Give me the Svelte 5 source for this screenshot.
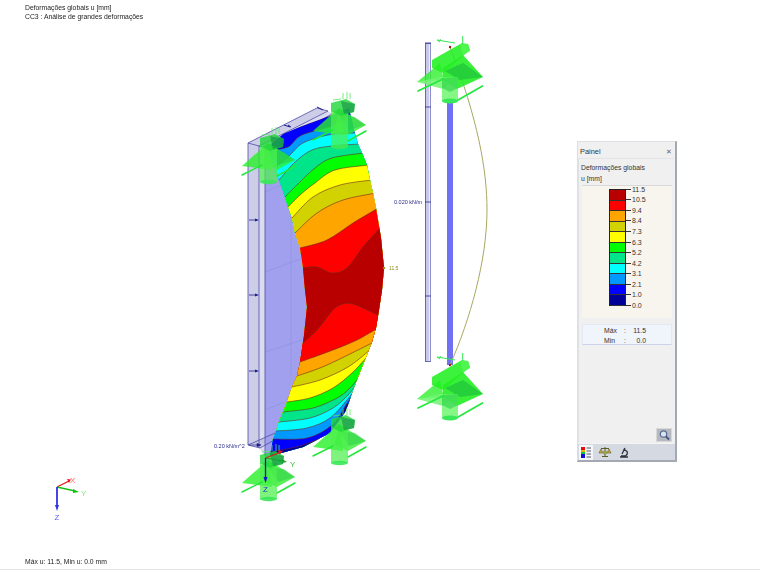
<script>
  const C = {
    navy: '#000099', blue: '#0000ff', azure: '#0099ff', cyan: '#00ffff', spring: '#00e58a',
    green: '#00ff00', yellow: '#ffff00', olive: '#d2d200', orange: '#ffa500', red: '#ff0000', dark: '#b80000'
  };
  const legend = [
    ['11.5', C.dark], ['10.5', C.red], ['9.4', C.orange], ['8.4', C.olive], ['7.3', C.yellow], ['6.3', C.green],
    ['5.2', C.spring], ['4.2', C.cyan], ['3.1', C.azure], ['2.1', C.blue], ['1.0', C.navy], ['0.0', null]
  ];
  function smooth(p) {
    let d = `M${p[0][0]} ${p[0][1]}`;
    for (let i = 0; i < p.length - 1; i++) {
      const a = p[Math.max(i - 1, 0)], b = p[i], c = p[i + 1], e = p[Math.min(i + 2, p.length - 1)];
      const c1 = [b[0] + (c[0] - a[0]) / 6, b[1] + (c[1] - a[1]) / 6];
      const c2 = [c[0] - (e[0] - b[0]) / 6, c[1] - (e[1] - b[1]) / 6];
      d += `C${c1[0].toFixed(1)} ${c1[1].toFixed(1)} ${c2[0].toFixed(1)} ${c2[1].toFixed(1)} ${c[0]} ${c[1]}`;
    }
    return d;
  }
  const bands = [
    [C.blue, [[262, 152], [283, 134], [302, 126], [332, 115], [350, 108]]],
    [C.azure, [[270, 150], [288, 147], [302, 135], [335, 125], [352, 113]]],
    [C.cyan, [[275, 168], [290, 155], [303, 143], [328, 135], [356, 133]]],
    [C.spring, [[279, 180], [295, 162], [312, 150], [332, 146], [360, 144]]],
    [C.green, [[285, 197], [298, 184], [315, 168], [332, 158], [364, 153]]],
    [C.yellow, [[288, 207], [300, 195], [315, 183], [335, 170], [369, 165]]],
    [C.olive, [[292, 218], [313, 197], [340, 185], [372, 180]]],
    [C.orange, [[295, 233], [317, 213], [343, 200], [376, 193]]],
    [C.red, [[300, 248], [327, 240], [353, 223], [380, 207]]],
    [C.dark, [[303, 268], [317, 267], [332, 273], [347, 268], [363, 247], [381, 227]]],
    [C.red, [[303, 343], [317, 330], [333, 310], [343, 304], [353, 304], [363, 308], [380, 316]]],
    [C.orange, [[300, 362], [333, 350], [357, 340], [378, 328]]],
    [C.olive, [[297, 376], [327, 365], [374, 342]]],
    [C.yellow, [[292, 387], [320, 380], [348, 367], [370, 350]]],
    [C.green, [[287, 402], [310, 398], [333, 388], [352, 373], [366, 358]]],
    [C.spring, [[283, 412], [313, 408], [337, 398], [350, 388], [360, 376]]],
    [C.cyan, [[279, 422], [310, 418], [333, 408], [348, 395], [356, 385]]],
    [C.azure, [[276, 431], [307, 428], [330, 418], [347, 400], [353, 392]]],
    [C.blue, [[273, 439], [307, 438], [332, 425], [346, 405], [351, 397]]],
    [C.navy, [[270, 452], [303, 445], [333, 431], [343, 412], [347, 404]]]
  ].map(([fill, pts]) => {
    const line = smooth(pts);
    const last = pts[pts.length - 1];
    return { fill, line, area: `${line}L400 ${last[1]}L400 470L240 470L240 ${pts[0][1]}Z` };
  });
  const outline = [
    [265, 150], [283, 134], [302, 126], [332, 115], [349, 108], [354, 130], [358, 144], [362, 153], [367, 165], [370, 180], [373, 193], [376, 208], [381, 238],
    [384, 268], [382, 290], [379, 310], [376, 328], [372, 342], [364, 362], [360, 372], [353, 390], [349, 402], [345, 412],
    [330, 433], [303, 447], [270, 456], [273, 439], [276, 431], [279, 422], [283, 412], [287, 402], [292, 387], [297, 376],
    [300, 362], [304, 335], [307, 307], [305, 290], [303, 268], [300, 248], [295, 233], [292, 218], [288, 207], [285, 197],
    [279, 180], [275, 168]
  ].map((p) => p.join(',')).join(' ');
  const face = '265,150 275,168 279,180 285,197 288,207 292,218 295,233 300,248 303,268 305,290 307,307 304,335 300,362 297,376 292,387 287,402 283,412 279,422 276,431 273,439 270,456 265,458';
  const loads = [220, 295, 371];
  const modelSupports = [[0, 0], [71, -35], [0, 317], [71, 281]];
  const planSupports = [[400, 30], [400, 347]];
  const planTicks = [43, 107, 202, 296];
</script>

<div class="page">
  <svg class="canvas" viewBox="0 0 760 570" width="760" height="570">
    <defs>
      <clipPath id="shape"><polygon points={outline} /></clipPath>
      <g id="plan-support">
        <polygon points="17,52 40,33 44,50" fill="#30f030" fill-opacity=".8" />
        <polygon points="17,52 40,47 58,47 43,59" fill="#70f470" fill-opacity=".85" />
        <polygon points="43,38 63,25 83,47 57,59 43,50" fill="#28ee28" fill-opacity=".92" />
        <polygon points="45,41 63,33 83,47 60,50" fill="#20c83c" fill-opacity=".8" />
        <rect x="42" y="47" width="16" height="24" fill="#70f670" fill-opacity=".85" />
        <ellipse cx="50" cy="71" rx="8" ry="2.400" fill="#38e858" />
        <polygon points="32,30 62,13 68,14 70,20 43,43 32,38" fill="#22f022" fill-opacity=".88" />
        <polygon points="60,14 68,14 70,21 63,25" fill="#50f650" fill-opacity=".9" />
        <polygon points="42,48 58,47 58,58 50,62 42,58" fill="#20d040" fill-opacity=".55" />
        <line x1="18" y1="61" x2="43" y2="49" stroke="#22e83c" stroke-width="1.700" stroke-linecap="round" />
        <line x1="58" y1="70" x2="82.500" y2="56" stroke="#22e83c" stroke-width="1.700" stroke-linecap="round" />
        <path d="M37 10l18 3M37 10l3 2M62.700 6v8M41 11l-1-2" stroke="#30e850" stroke-width="1" fill="none" />
      </g>
      <g id="model-support">
        <polygon points="242,166 268,143 272,170" fill="#28f028" fill-opacity=".8" />
        <polygon points="268,143 295,160 277,170 264,164" fill="#30ec30" fill-opacity=".78" />
        <polygon points="268,150 284,152 295,160 278,165" fill="#20c840" fill-opacity=".45" />
        <rect x="260" y="146" width="17" height="36" fill="#4cf04c" fill-opacity=".72" />
        <ellipse cx="268.500" cy="182" rx="8.500" ry="2.200" fill="#38e858" fill-opacity=".9" />
        <polygon points="260,138 275,134 284,139 283,147 270,151 260,146" fill="#22d83a" fill-opacity=".82" />
        <polygon points="270,136 284,139 283,147 273,149" fill="#128c48" fill-opacity=".6" />
        <line x1="242" y1="175" x2="262" y2="165" stroke="#22e83c" stroke-width="1.500" stroke-linecap="round" />
        <line x1="277" y1="176" x2="295" y2="166" stroke="#22e83c" stroke-width="1.500" stroke-linecap="round" />
        <path d="M272 134v-6M276 134v-7M279 134v-6M262 135l8-1" stroke="#50ec60" stroke-width=".8" fill="none" />
      </g>
    </defs>

    <!-- plate of the left view -->
    <polygon points="248,143 317,108 328,111 259,146 259,446 248,445" fill="#cdcde8" />
    <polygon points="259,146 328,111 332,114 265,150 265,456 259,448" fill="#dcdcf0" />
    <polygon points="248,445 260,448 277,432 300,425 259,440" fill="#c4c4e4" />
    <polygon points={face} fill="#a0a0ee" />
    <path d="M265 192L282 185M265 272L303 258M265 352L302 340M265 410L285 402" stroke="#8e8ed8" stroke-width=".6" fill="none" />
    <path d="M291 150V300M291 300V375" stroke="#8e8ed8" stroke-width=".5" fill="none" />
    <path d="M248 143L317 108L328 111L259 146ZM259 146L265 150L332 114M248 143V445L260 448M259 146V448M265 150V456M248 445L300 422M260 448L278 438" fill="none" stroke="#4c4ca6" stroke-width=".8" />
    {#each loads as y}
      <path d="M249 {y}H257" stroke="#1c1c8a" stroke-width=".8" />
      <path d="M255 {y - 1.500}L259 {y}L255 {y + 1.500}Z" fill="#1c1c8a" />
    {/each}
    <path d="M284 125L290 127M288 125L291 127M317 107L323 110" stroke="#1c1c8a" stroke-width="1" />
    <path d="M249 445H258M257 443.500L261 445L257 446.500Z" fill="#1c1c8a" stroke="#1c1c8a" stroke-width=".6" />

    <!-- deformed result -->
    <g clip-path="url(#shape)">
      {#each bands as b}
        <path d={b.area} fill={b.fill} />
      {/each}
      {#each bands as b}
        <path d={b.line} fill="none" stroke="#6e2a22" stroke-width=".6" />
      {/each}
    </g>
    <circle cx="384" cy="268" r="1.200" fill="#8c8c20" />
    <text class="olive" x="389" y="270">11.5</text>
    <text class="load" x="214" y="448">0.20 kN/m^2</text>

    <!-- right view -->
    <rect x="425.500" y="43.500" width="5" height="318" fill="#c9c9ec" stroke="#5a5ab0" stroke-width=".9" />
    <rect x="429" y="44" width="1.300" height="317" fill="#eeeefa" />
    {#each planTicks as y}
      <path d="M425 {y}H431" stroke="#3a3a98" stroke-width=".9" />
    {/each}
    <rect x="447" y="100" width="6" height="265" fill="#7070f4" />
    <path d="M450 47C478 120 487 170 487 210C487 260 470 320 450 365" fill="none" stroke="#a8a860" stroke-width="1" />
    <text class="load" x="394" y="204">0.020 kN/m</text>

    {#each planSupports as s}
      <use href="#plan-support" transform="translate({s[0]} {s[1]})" />
    {/each}
    {#each modelSupports as s}
      <use href="#model-support" transform="translate({s[0]} {s[1]})" />
    {/each}
    <circle cx="450" cy="47" r="1.200" fill="#a01818" />
    <circle cx="450" cy="365" r="1.200" fill="#a01818" />

    <!-- axes on the model -->
    <path d="M265.500 458L280 452.500" stroke="#e81818" stroke-width="1.300" />
    <path d="M278 450.500L283 451L279.500 454.500Z" fill="#e81818" />
    <path d="M265.500 458L283 461" stroke="#18a028" stroke-width="1.200" />
    <path d="M282 459L287 462L281.500 463Z" fill="#18a028" />
    <path d="M265.500 458V478" stroke="#1010d0" stroke-width="1.300" />
    <path d="M263.500 477H267.500L265.500 483Z" fill="#1010d0" />
    <text class="axis" x="290" y="467" fill="#40c040">Y</text>
    <text class="axis" x="263" y="492" fill="#2040c0">Z</text>

    <!-- global axes -->
    <path d="M57 487L69 481" stroke="#f01818" stroke-width="1.300" />
    <path d="M67 479L71 479.500L69 483Z" fill="#f01818" />
    <path d="M57 487L75 491" stroke="#12c012" stroke-width="1.300" />
    <path d="M73 489L79 492L73 493Z" fill="#12c012" />
    <path d="M57 487V506" stroke="#3030e8" stroke-width="1.800" />
    <path d="M55 505H59L57 511Z" fill="#3030e8" />
    <text class="axis" x="70" y="483" fill="#ff7070">X</text>
    <text class="axis" x="81" y="496" fill="#80e880">Y</text>
    <text class="axis" x="54.500" y="520" fill="#6060f0">Z</text>
  </svg>

  <header class="title">
    <div>Deformações globais u [mm]</div>
    <div>CC3 : Análise de grandes deformações</div>
  </header>

  <footer class="status">Máx u: 11.5, Min u: 0.0 mm</footer>

  <aside class="panel">
    <div class="panel-head"><span>Painel</span><span class="close">✕</span></div>
    <div class="panel-body">
      <div class="caption">Deformações globais</div>
      <div class="caption">u [mm]</div>
      <div class="legend">
        <div class="scale">
          <div class="swatches">
            {#each legend.slice(0, 11) as row}
              <div class="swatch" style="background:{row[1]}"></div>
            {/each}
          </div>
          <div class="labels">
            {#each legend as row}
              <div class="label"><i></i><span>{row[0]}</span></div>
            {/each}
          </div>
        </div>
      </div>
      <div class="stats">
        <div class="stat"><span>Máx</span><span>:</span><span>11.5</span></div>
        <div class="stat"><span>Min</span><span>:</span><span>0.0</span></div>
      </div>
      <div class="tool-row">
        <button class="zoom-btn" aria-label="Lupa">
          <svg viewBox="0 0 16 14" width="16" height="14">
            <circle cx="7.500" cy="6" r="3.200" fill="#d8e4f4" stroke="#5a6a90" stroke-width="1.200" />
            <path d="M10 8.500L13 11.500" stroke="#46557c" stroke-width="1.800" />
          </svg>
        </button>
      </div>
    </div>
    <div class="tabs">
      <span class="tab active">
        <svg viewBox="0 0 13 13" width="13" height="13">
          <rect x="1" y="1" width="4" height="3" fill="#e01010" />
          <rect x="1" y="4" width="4" height="2" fill="#f0b000" />
          <rect x="1" y="6" width="4" height="2" fill="#10c040" />
          <rect x="1" y="8" width="4" height="4" fill="#1010d0" />
          <path d="M6.500 2H11M6.500 5H11M6.500 8H11M6.500 11H11" stroke="#8a8f98" stroke-width="1.300" />
        </svg>
      </span>
      <span class="tab">
        <svg viewBox="0 0 14 12" width="14" height="12">
          <path d="M7 1V10M3 2.500H11M4 10.500H10" stroke="#5e5a30" stroke-width="1" />
          <path d="M3 3L1 7H5ZM11 3L9 7H13Z" fill="#c8a838" stroke="#5e5a30" stroke-width=".6" />
          <circle cx="7" cy="6.500" r="2.200" fill="#98a050" />
        </svg>
      </span>
      <span class="tab">
        <svg viewBox="0 0 12 12" width="12" height="12">
          <path d="M2 11H10M7 2L4 8M5.500 3L9 5.500A3.500 3.500 0 0 1 7 10H3" stroke="#30343c" stroke-width="1.300" fill="none" />
        </svg>
      </span>
    </div>
  </aside>
</div>

<style>
  :global(body) { margin: 0; background: #fff; }
  .page {
    position: relative;
    width: 760px;
    height: 570px;
    display: flex;
    flex-direction: column;
    justify-content: space-between;
    box-sizing: border-box;
    padding: 3px 0 3px 25px;
    border-bottom: 1px solid #e4e4e4;
    overflow: hidden;
    font-family: "Liberation Sans", Arial, sans-serif;
    color: #222;
    font-size: 6.800px;
    line-height: 9px;
    filter: blur(.3px);
  }
  .canvas { position: absolute; left: 0; top: 0; }
  .title, .status { position: relative; }
  .load { font-size: 5.500px; fill: #2a2a8c; font-family: "Liberation Sans", sans-serif; }
  .olive { font-size: 5px; fill: #8c8c20; font-family: "Liberation Sans", sans-serif; }
  .axis { font-size: 8px; font-family: "Liberation Sans", sans-serif; }

  .panel {
    position: absolute;
    left: 577px;
    top: 141px;
    width: 100px;
    height: 321px;
    box-sizing: border-box;
    display: flex;
    flex-direction: column;
    background: #f0f0f0;
    border: 1px solid #dcdfe4;
    border-right: 2px solid #a4a8b0;
    border-bottom: 2px solid #a4a8b0;
    color: #333;
    font-size: 6.800px;
  }
  .panel-head {
    height: 16px;
    display: flex;
    align-items: center;
    justify-content: space-between;
    padding: 2px 3px 0 2px;
    box-sizing: border-box;
    font-size: 7.400px;
    flex: none;
  }
  .close { font-size: 7px; color: #666; }
  .panel-body {
    flex: 1;
    min-height: 0;
    display: flex;
    flex-direction: column;
    padding: 3px 2px 1px 3px;
    border-top: 1px solid #e2e4e8;
    border-left: 1px solid #dfe1e5;
    margin: 0 1px 0 0;
  }
  .caption { height: 11px; line-height: 11px; margin-left: -1px; }
  .legend {
    height: 133px;
    margin-top: 1px;
    background: #f8f5ee;
    border-top: 1px solid #d8d8d8;
    box-sizing: border-box;
    flex: none;
  }
  .scale { display: flex; margin: 2px 0 0 27px; }
  .swatches { width: 17px; border: 1px solid #222; box-sizing: border-box; height: 117px; margin-top: 1px; }
  .swatch { height: 10.550px; box-sizing: border-box; border-bottom: .5px solid #333; }
  .labels { display: flex; flex-direction: column; margin-top: -4px; }
  .label { height: 10.560px; display: flex; align-items: center; }
  .label i { display: block; width: 5px; height: 1px; background: #333; margin-right: 1px; }
  .label span { font-size: 7px; color: #333; }
  .stats {
    margin-top: 6px;
    height: 21px;
    background: #f0f4fb;
    border: 1px solid #e4e8f4;
    border-bottom-color: #cdd2ec;
    box-sizing: border-box;
    padding: 1px 0 0 21px;
    flex: none;
  }
  .stat {
    display: grid;
    grid-template-columns: 15px 12px 15px;
    height: 10px;
    line-height: 10px;
    justify-content: start;
    text-align: center;
  }
  .stat span:first-child { text-align: left; }
  .stat span:last-child { text-align: right; }
  .tool-row { margin-top: auto; display: flex; justify-content: flex-end; }
  .zoom-btn {
    width: 16px;
    height: 14px;
    padding: 0;
    border: 1px solid #d8d8d8;
    background: #b4b8c0;
    display: block;
    line-height: 0;
  }
  .zoom-btn svg { display: block; margin: -1px; }
  .tabs {
    height: 16px;
    flex: none;
    display: flex;
    align-items: center;
    gap: 5px;
    background: #d4d9e2;
    border-top: 1px solid #f4f4f4;
    padding-left: 1px;
  }
  .tab { display: flex; width: 14px; height: 15px; align-items: center; justify-content: center; }
  .tab.active { background: #f4f6fa; }
</style>
